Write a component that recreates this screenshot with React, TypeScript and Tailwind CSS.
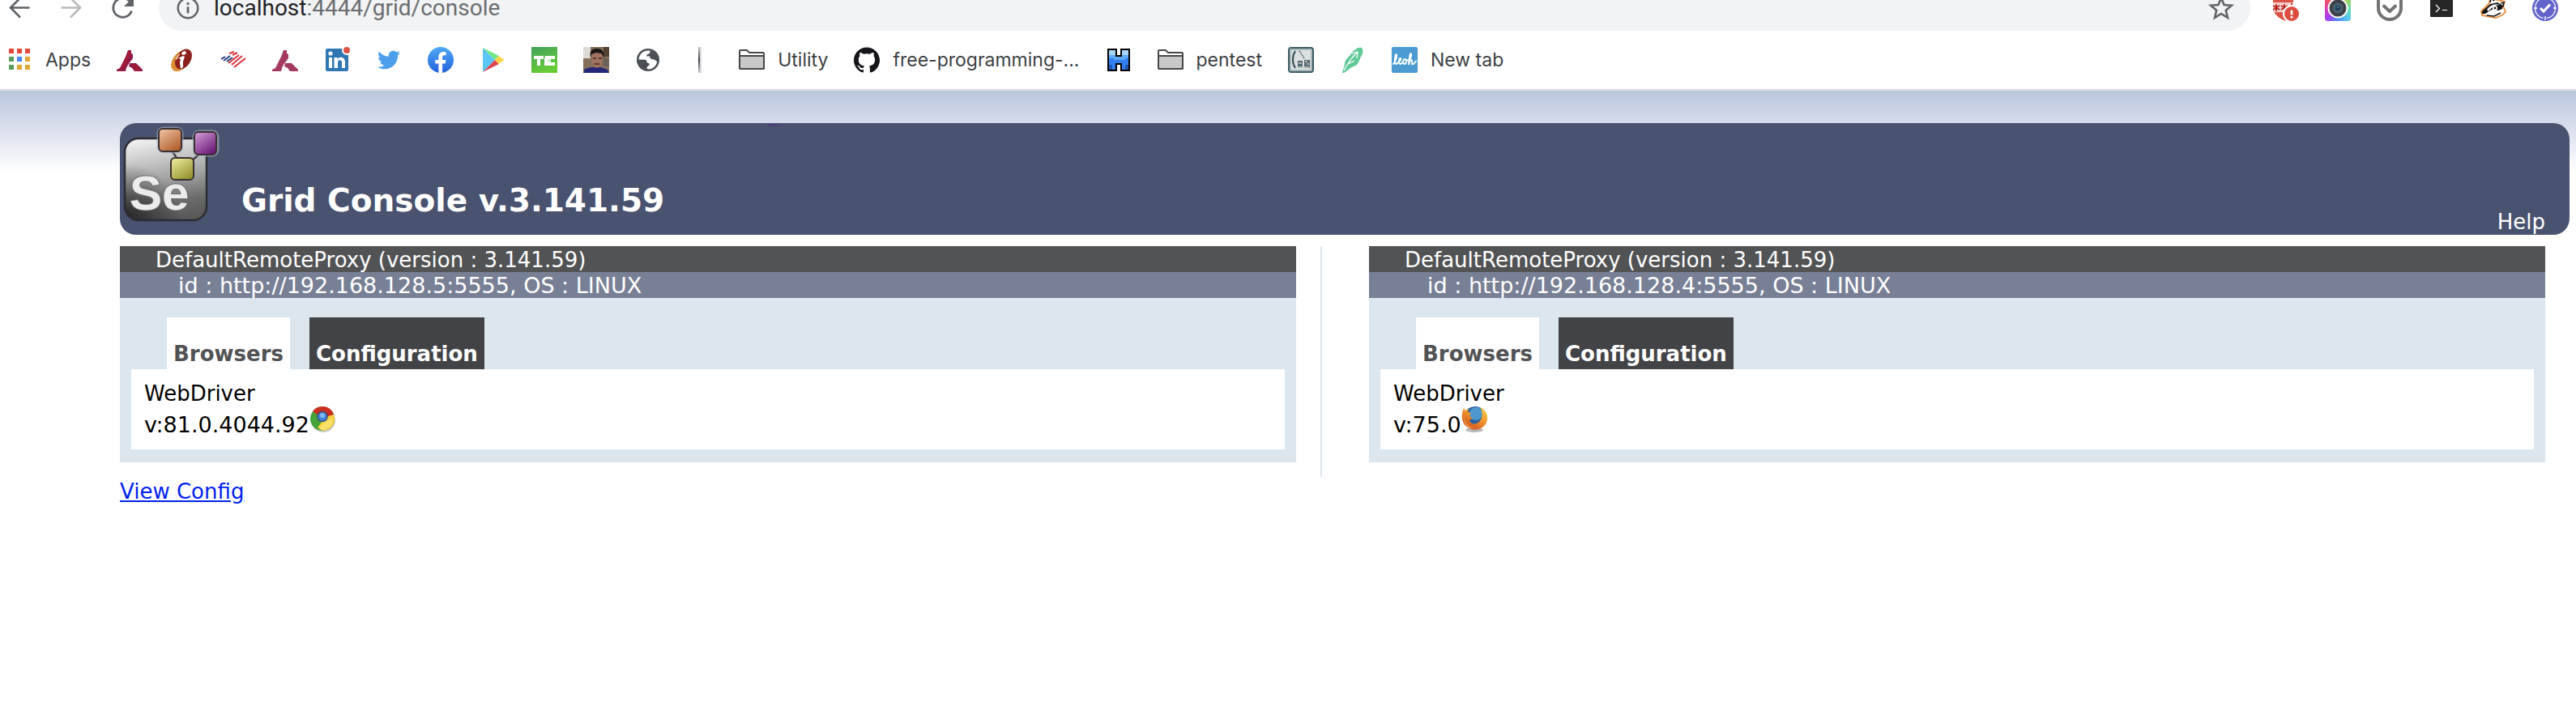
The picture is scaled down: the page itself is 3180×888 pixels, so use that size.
import React from "react";
import { FaTwitter } from "react-icons/fa";
import { SiGithub } from "react-icons/si";

type IconProps = { children: React.ReactNode; className?: string };

function Icon({ children, className = "size-8" }: IconProps) {
  return (
    <svg viewBox="0 0 32 32" className={`${className} shrink-0`} aria-hidden="true">
      {children}
    </svg>
  );
}

function AppsIcon() {
  const colors = [
    "#e2493b", "#e2493b", "#e2493b",
    "#559c5c", "#4688f1", "#e5a335",
    "#559c5c", "#e5a335", "#e5a335",
  ];
  return (
    <Icon>
      {colors.map((color, i) => (
        <rect key={i} x={3 + (i % 3) * 10} y={2 + Math.floor(i / 3) * 10} width="6" height="6" fill={color} />
      ))}
    </Icon>
  );
}

function PeakIcon({ color, shade }: { color: string; shade: string }) {
  return (
    <Icon>
      <path d="M14 4h4v4l2 1v5l-3 4-3 4-2 4-1 4H0v-2l4-2 3-6 4-8z" fill={color} />
      <path d="M16 20h8l4 4 4 4v2H22l-3-4-4-2z" fill={color} />
      <path d="M15 6l3 1-9 18-5 4 5-10zM19 21l4 1 6 7h-5z" fill={shade} opacity="0.7" />
    </Icon>
  );
}

function BankSwirlIcon() {
  return (
    <Icon>
      <ellipse cx="15" cy="17" rx="9.500" ry="15" transform="rotate(38 15 17)" fill="#dc8d35" />
      <ellipse cx="18.500" cy="15" rx="9" ry="13.500" transform="rotate(32 18.500 15)" fill="#8d1f1c" />
      <path d="M17 6l4-1 1 3-3 2-3-1zM12 14l6-3 2 1-2 6v7l-3 2-1-8 1-4z" fill="#fff" />
      <path d="M8 15l5-7 1 1-4 7z" fill="#f0c9a0" />
    </Icon>
  );
}

function FlagIcon() {
  return (
    <Icon>
      <path d="M1 15l5-3M4 17l8-6M8 18l7-5" stroke="#1f3a78" strokeWidth="2" />
      <path d="M11 8l6-2M15 10l6-3M10 20l13-10M14 22L27 11M17 25l14-11" stroke="#d8323f" strokeWidth="2" />
    </Icon>
  );
}

function LinkedInIcon() {
  return (
    <Icon>
      <rect x="2" y="2" width="28" height="28" rx="2" fill="#2f77b3" />
      <circle cx="8" cy="8" r="2.600" fill="#fff" />
      <path d="M6 13h4v13H6zM12.500 13h4v2c2.500-4 9.500-3 9.500 3.500V26h-4v-7c0-4-5-3.500-5 0v7h-4.500z" fill="#fff" />
      <circle cx="28" cy="4" r="6" fill="#fff" />
      <circle cx="28" cy="4" r="4" fill="#dc5244" />
    </Icon>
  );
}

function FacebookIcon() {
  return (
    <Icon>
      <defs>
        <linearGradient id="fb" x1="0" y1="0" x2="0" y2="1">
          <stop offset="0" stopColor="#4ea9f7" />
          <stop offset="1" stopColor="#2461da" />
        </linearGradient>
      </defs>
      <circle cx="16" cy="16" r="16" fill="url(#fb)" />
      <path d="M13.400 32V20.600H9.300V16h4.100v-3.600C13.400 8.300 15.700 6 19.400 6c1.500 0 3.200.3 3.200.3v4h-2c-1.900 0-2.500 1.200-2.500 2.400V16h4.300l-.8 4.600h-3.500V32z" fill="#fff" />
    </Icon>
  );
}

function PlayStoreIcon() {
  return (
    <Icon>
      <path d="M4 1v30l15-15z" fill="#5bc6f5" />
      <path d="M4 1l20 10-5 5z" fill="#6ee887" />
      <path d="M4 31l20-10-5-5z" fill="#de4350" />
      <path d="M23.500 11l6 4q1 1 0 2l-6 4-4.500-5z" fill="#fbd548" />
    </Icon>
  );
}

function TechIcon() {
  return (
    <Icon>
      <defs>
        <linearGradient id="tech" x1="0" y1="0" x2="0.400" y2="1">
          <stop offset="0" stopColor="#42a15c" />
          <stop offset="1" stopColor="#67cb35" />
        </linearGradient>
      </defs>
      <rect width="32" height="32" fill="url(#tech)" />
      <path d="M3 11h12v4h-4v8H7v-8H3zM17 11h12v4h-8v4h8v4H16v-8z" fill="#fff" />
      <rect x="20" y="15" width="4" height="4" fill="#d3f0d3" />
    </Icon>
  );
}

function PortraitIcon() {
  return (
    <Icon>
      <rect width="32" height="32" fill="#85705c" />
      <rect width="9" height="14" fill="#dedbd6" />
      <rect x="25" width="7" height="12" fill="#55412f" />
      <path d="M24 12l8 3v10l-8-2z" fill="#6d6258" />
      <path d="M0 32l2-5 8-2h12l8 3 2 4z" fill="#27277a" />
      <ellipse cx="17" cy="15" rx="7" ry="11" fill="#a07260" />
      <path d="M9 13C7 4 12 2 17 2s10 3 8 11l-2-5-7-1-6 2z" fill="#1b1618" />
      <path d="M12 13h4v2h-4zM19 13h4v2h-4zM14 20h6v2h-6z" fill="#5b352d" />
    </Icon>
  );
}

function GlobeIcon() {
  return (
    <Icon>
      <circle cx="16" cy="16" r="14" fill="#4c5054" />
      <path
        d="M18 4.600c-8-1.300-13.400 5-13.400 11l8 .2c2 .2 1.500 4 3.500 4.200 2.500.2 2 2.500 0 3.500-1.500 1-2 2.500-1 3.800 6 1 11.500-3.800 12-9.300-2-1.500-3.500-3-6-3-2 0-3-1.500-3-3.500h-4c-.5-3 4.500-2 4.500-6z"
        fill="#fff"
      />
      <path d="M22 6l-2 3 1 3 5 1z" fill="#4c5054" />
    </Icon>
  );
}

function DividerIcon() {
  return (
    <Icon>
      <defs>
        <linearGradient id="bar" x1="0" y1="0" x2="0" y2="1">
          <stop offset="0" stopColor="#c8c8cb" />
          <stop offset="0.500" stopColor="#3f4044" />
          <stop offset="1" stopColor="#c8c8cb" />
        </linearGradient>
      </defs>
      <rect x="14" width="2" height="32" fill="url(#bar)" />
      <rect x="16" width="2" height="32" fill="#d9d9de" />
    </Icon>
  );
}

function FolderIcon() {
  return (
    <Icon>
      <path d="M1 26V5q0-1 1-1h8l3 3h17q1 0 1 1v18q0 1-1 1H2q-1 0-1-1z" fill="#fff" stroke="#474747" strokeWidth="2" />
      <path d="M1 11h30v15q0 1-1 1H2q-1 0-1-1z" fill="#c8c8c8" stroke="#474747" strokeWidth="2" />
    </Icon>
  );
}

function BlockHIcon() {
  return (
    <Icon>
      <path d="M2 2h12v8h4V2h12v28H18v-8h-4v8H2z" fill="#000" />
      <path d="M4 4h8v8h8V4h8v24h-8v-8h-8v8H4z" fill="#327fee" />
      <path d="M4 4h8v6H4zM20 4h8v6h-8z" fill="#a9d4fb" />
      <path d="M4 10h8v2h8v-2h8v4h-4v2H10v-2H4z" fill="#5fa9f9" />
      <path d="M4 22h4v6H4zM24 22h4v6h-4z" fill="#2258b0" />
    </Icon>
  );
}

function SketchTileIcon() {
  return (
    <Icon>
      <rect x="1" y="1" width="30" height="30" rx="3" fill="#dbe0e1" stroke="#3b5c63" strokeWidth="2" />
      <rect x="3" y="3" width="26" height="26" rx="2" fill="none" stroke="#aab8bb" strokeWidth="2" />
      <path d="M9 5c-4 6-4 15 0 21" fill="none" stroke="#344c52" strokeWidth="2" />
      <path d="M14 5l6 9" stroke="#4e6368" strokeWidth="1.500" strokeDasharray="2 1" />
      <path d="M12 17h6v9h-6zM20 16h7v10h-7z" fill="#566a6e" />
      <path d="M13 20h4M21 18h3M23 21h3M12 25h14" stroke="#c8d0d1" strokeWidth="1.500" />
    </Icon>
  );
}

function FeatherIcon() {
  return (
    <Icon>
      <path d="M27 1c2 3 2 7-1 11-2 3-2 7-5 10-3 2-6 2-9 5L5 32H3c1-5 3-8 3-12 0-3 3-6 6-9C17 4 21 0 27 1z" fill="#5fc997" />
      <path d="M5 29C10 20 15 12 22 6l-7 2M22 6l-1 8M10 21l8-4" fill="none" stroke="#fff" strokeWidth="1.300" />
    </Icon>
  );
}

function ScriptTileIcon() {
  return (
    <Icon>
      <rect width="32" height="32" rx="2" fill="#4c9bd3" />
      <path
        d="M2 21c4-4 5-12 3.500-12S3 21 5 21s3-2 4-3c3-1 3-4 1.500-4s-2.500 7 0 7 3-2 4-4 3-3 3.500 0-1 4-2.500 4-2-4 0-6M18 16c2 1 2 0 3 0 3-1 4-8 2.500-8S21 21 21 22c1-4 2-6 3.500-6S24 22 26 21.500s2-2 4-4"
        fill="none"
        stroke="#fff"
        strokeWidth="1.800"
        strokeLinecap="round"
      />
    </Icon>
  );
}

function ArrowIcon({ color, flip }: { color: string; flip?: boolean }) {
  return (
    <Icon className={flip ? "size-8 -scale-x-100" : "size-8"}>
      <path d="M28.500 15.500H5.500M17 3.500L5 15.500l12 12" fill="none" stroke={color} strokeWidth="2.600" />
    </Icon>
  );
}

function ReloadIcon() {
  return (
    <Icon>
      <path d="M26.500 19.500A11.700 11.700 0 1 1 24 7.500" fill="none" stroke="#5f6368" strokeWidth="2.800" />
      <path d="M29 2v12H17z" fill="#5f6368" />
    </Icon>
  );
}

function InfoIcon() {
  return (
    <Icon className="size-7">
      <circle cx="16" cy="16" r="14" fill="none" stroke="#5f6368" strokeWidth="2.800" />
      <path d="M16 8v3.500M16 14v9" stroke="#5f6368" strokeWidth="3.200" />
    </Icon>
  );
}

function StarIcon() {
  return (
    <Icon>
      <path
        d="M16 3.500l3.600 8.500 9.200.8-7 6 2.100 9L16 23l-7.900 4.800 2.100-9-7-6 9.200-.8z"
        fill="none"
        stroke="#5f6368"
        strokeWidth="2.600"
      />
    </Icon>
  );
}

function PasswordShieldIcon() {
  return (
    <Icon>
      <path d="M0 0h25v16L16 32C5 28 0 22 0 14z" fill="#dc5244" />
      <rect y="9" width="25" height="12" fill="#f3cfcb" />
      <path d="M4 11v9M0 13l8 5M8 13l-8 5M14 11v9M10 13l8 5M18 13l-8 5M23 10v4" stroke="#b5201a" strokeWidth="1.800" />
      <circle cx="23" cy="23" r="11" fill="#fff" />
      <circle cx="23" cy="23" r="9" fill="#dc4d3f" />
      <path d="M23 18.500v6M23 26v2.500" stroke="#fff" strokeWidth="2.600" />
    </Icon>
  );
}

function LensIcon() {
  return (
    <div className="flex size-8 shrink-0 items-center justify-center rounded-sm bg-[conic-gradient(#f0a33a,#a8cf4d,#6fe0b0,#58c8ea,#4b8cf0,#a43ff0,#e33bb0,#ef5a55,#f0a33a)]">
      <svg viewBox="0 0 26 26" className="size-[26px]" aria-hidden="true">
        <circle cx="13" cy="13" r="12.500" fill="#fff" />
        <circle cx="13" cy="13" r="10.500" fill="#3d4147" />
        <circle cx="13" cy="13" r="6.500" fill="#4b5f70" />
        <circle cx="13" cy="13" r="3.200" fill="#233f57" />
        <circle cx="13" cy="12" r="1" fill="#5c90b5" />
      </svg>
    </div>
  );
}

function PocketIcon() {
  return (
    <Icon>
      <path d="M2 5q0-2 2-2h24q2 0 2 2v11a14 14 0 0 1-28 0z" fill="#fff" stroke="#737373" strokeWidth="4" />
      <path d="M9 13.500l7 6.500 7-6.500" fill="none" stroke="#737373" strokeWidth="4" strokeLinecap="round" strokeLinejoin="round" />
    </Icon>
  );
}

function TerminalIcon() {
  return (
    <Icon>
      <rect x="2" width="28" height="27" rx="1.500" fill="#262626" />
      <path d="M9 12l4.500 4.500L9 21M17 18.500h6" fill="none" stroke="#fff" strokeWidth="1.200" />
    </Icon>
  );
}

function BadgerIcon() {
  return (
    <Icon>
      <path d="M1 20L11 10l1-6 4 1 10 2 4 1-2 5 3 8-5 4-7 3-10-2-7-1z" fill="#fff" stroke="#e98b3c" strokeWidth="1.800" />
      <path d="M2 20L12 11l9-2 7 4-1 4-5 2-6-2-4 2-6 4H2z" fill="#151515" />
      <path d="M8 18c4-6 10-8 16-6-6 0-10 3-14 8z" fill="#fff" />
      <circle cx="18" cy="16" r="3" fill="#fff" />
      <circle cx="18" cy="16" r="1.400" fill="#151515" />
      <path d="M12 9l1-5 4 3M25 10l4-1-1 5M8 25l9 1 8-4" fill="none" stroke="#151515" strokeWidth="1.600" />
    </Icon>
  );
}

function BadgeCheckIcon() {
  return (
    <Icon>
      <circle cx="16" cy="16" r="16" fill="#6264cb" />
      <circle cx="16" cy="16" r="12.600" fill="none" stroke="#fff" strokeWidth="1.400" strokeDasharray="15 4.800" strokeDashoffset="-2.400" />
      <circle cx="4" cy="16" r="1.800" fill="#fff" />
      <circle cx="28" cy="16" r="1.800" fill="#fff" />
      <path d="M16 26v5" stroke="#fff" strokeWidth="1.400" />
      <path d="M10 16l4 4 8-8.500" fill="none" stroke="#fff" strokeWidth="3" />
    </Icon>
  );
}

function ChromeIcon() {
  return (
    <svg viewBox="0 0 32 32" className="inline-block size-8 align-baseline" role="img" aria-label="Chrome">
      <circle cx="17" cy="17" r="15" fill="#c9c9c9" />
      <circle cx="16" cy="15" r="15" fill="#45a33b" />
      <path d="M16 15L4 6C7 2 11 0 16 0c7 0 12 4 14 10z" fill="#cf2e22" />
      <path d="M20 13l10-3c4 9-3 20-14 20l-6-4 6-8z" fill="#f5d33f" />
      <path d="M12 27l8-9 9-3c0 8-6 14-13 14z" fill="#f8e06a" />
      <circle cx="16" cy="12.500" r="6.800" fill="#3c4f70" />
      <circle cx="16" cy="12.500" r="5.300" fill="#4384dc" />
      <circle cx="16" cy="11" r="3" fill="#83b8f3" />
    </svg>
  );
}

function FirefoxIcon() {
  return (
    <svg viewBox="0 0 32 32" className="inline-block size-8 align-baseline" role="img" aria-label="Firefox">
      <defs>
        <linearGradient id="fox" x1="0.900" y1="0" x2="0.200" y2="1">
          <stop offset="0" stopColor="#f6d24c" />
          <stop offset="0.500" stopColor="#ee8f2c" />
          <stop offset="1" stopColor="#c9451c" />
        </linearGradient>
      </defs>
      <ellipse cx="16" cy="29" rx="11" ry="3" fill="#b9b9bd" />
      <circle cx="17" cy="14" r="14" fill="#2c5f9e" />
      <circle cx="18" cy="9" r="8" fill="#4d97cf" />
      <path
        d="M3 2l2 3 4-2-1 4 4 1-2 4 4 2-4 3c1 5 8 6 12 2s5-12 1-18c8 3 11 12 8 19-4 8-14 11-21 7C0 23-1 11 3 2z"
        fill="url(#fox)"
      />
      <path d="M3 12c1 8 6 14 14 14-5 2-10 0-12-4-2-3-3-7-2-10z" fill="#f4ad52" opacity="0.700" />
    </svg>
  );
}

function SeleniumLogo() {
  return (
    <svg viewBox="1 2 130 130" className="size-[130px] shrink-0" role="img" aria-label="Selenium">
      <defs>
        <linearGradient id="body" x1="0.300" y1="0" x2="0.500" y2="1">
          <stop offset="0" stopColor="#efefef" />
          <stop offset="0.500" stopColor="#a4a4a4" />
          <stop offset="0.800" stopColor="#6c6c6c" />
          <stop offset="1" stopColor="#5a5a5a" />
        </linearGradient>
        <radialGradient id="corner" cx="0" cy="1" r="0.700">
          <stop offset="0" stopColor="#141414" stopOpacity="0.800" />
          <stop offset="1" stopColor="#141414" stopOpacity="0" />
        </radialGradient>
        <linearGradient id="orange" x1="0" y1="0" x2="0.700" y2="1">
          <stop offset="0" stopColor="#f2c7ab" />
          <stop offset="1" stopColor="#b1602b" />
        </linearGradient>
        <linearGradient id="purple" x1="0" y1="0" x2="0.700" y2="1">
          <stop offset="0" stopColor="#d7a2da" />
          <stop offset="1" stopColor="#6d1a77" />
        </linearGradient>
        <linearGradient id="yellow" x1="0" y1="0" x2="0.700" y2="1">
          <stop offset="0" stopColor="#f2f0a4" />
          <stop offset="1" stopColor="#96942d" />
        </linearGradient>
      </defs>
      <rect x="7" y="21" width="101" height="101" rx="17" fill="url(#body)" stroke="#2b2d33" strokeWidth="2.500" />
      <rect x="8" y="22" width="99" height="99" rx="16" fill="url(#corner)" />
      <path d="M64 34l10 16M103 37L88 50" stroke="#43454a" strokeWidth="2.500" />
      <g stroke="#aeb4c4" strokeOpacity="0.600" strokeWidth="5" fill="none">
        <rect x="49" y="9" width="28" height="28" rx="6" />
        <rect x="93" y="13" width="28" height="28" rx="6" />
      </g>
      <g stroke="#3a3030" strokeWidth="2">
        <rect x="49" y="9" width="28" height="28" rx="5" fill="url(#orange)" />
        <rect x="93" y="13" width="27" height="28" rx="5" fill="url(#purple)" />
        <rect x="64" y="45" width="28" height="27" rx="5" fill="url(#yellow)" />
      </g>
      <text
        x="13"
        y="109"
        fontFamily="Liberation Sans, Arial, sans-serif"
        fontWeight="bold"
        fontSize="60"
        fill="#ececec"
        stroke="#6a6a6a"
        strokeWidth="2"
        paintOrder="stroke"
      >
        Se
      </text>
    </svg>
  );
}

const bookmarks: { name: string; label?: string; icon: React.ReactNode }[] = [
  { name: "Apps", label: "Apps", icon: <AppsIcon /> },
  { name: "Peak", icon: <PeakIcon color="#941b49" shade="#a81f24" /> },
  { name: "Bank", icon: <BankSwirlIcon /> },
  { name: "Flag", icon: <FlagIcon /> },
  { name: "Peak Rewards", icon: <PeakIcon color="#a33a62" shade="#a33a62" /> },
  { name: "LinkedIn", icon: <LinkedInIcon /> },
  { name: "Twitter", icon: <FaTwitter className="size-8 shrink-0 px-[2px] text-[#4c9fea]" /> },
  { name: "Facebook", icon: <FacebookIcon /> },
  { name: "Play Store", icon: <PlayStoreIcon /> },
  { name: "Tech news", icon: <TechIcon /> },
  { name: "Profile", icon: <PortraitIcon /> },
  { name: "Website", icon: <GlobeIcon /> },
  { name: "Divider", icon: <DividerIcon /> },
  { name: "Utility", label: "Utility", icon: <FolderIcon /> },
  { name: "free-programming", label: "free-programming-...", icon: <SiGithub className="size-8 shrink-0 text-[#17151a]" /> },
  { name: "H", icon: <BlockHIcon /> },
  { name: "pentest", label: "pentest", icon: <FolderIcon /> },
  { name: "Sketch", icon: <SketchTileIcon /> },
  { name: "Feather", icon: <FeatherIcon /> },
  { name: "New tab", label: "New tab", icon: <ScriptTileIcon /> },
];

const extensions = [
  { name: "Password alert", icon: <PasswordShieldIcon /> },
  { name: "Camera", icon: <LensIcon /> },
  { name: "Pocket", icon: <PocketIcon /> },
  { name: "Terminal", icon: <TerminalIcon /> },
  { name: "Badger", icon: <BadgerIcon /> },
  { name: "Verified", icon: <BadgeCheckIcon /> },
];

function BrowserBar() {
  return (
    <header className="border-b-2 border-[#dadce0] bg-white font-['Inter',sans-serif]">
      <div className="h-[38px] overflow-hidden">
        <div className="-mt-[18px] flex h-14 items-center pr-[22px] pl-2">
          <div className="flex items-center gap-8 pr-7">
            <button aria-label="Back"><ArrowIcon color="#5f6368" /></button>
            <button aria-label="Forward"><ArrowIcon color="#bababc" flip /></button>
            <button aria-label="Reload"><ReloadIcon /></button>
          </div>
          <div className="flex h-14 flex-1 items-center gap-[18px] rounded-full bg-[#f1f3f4] pr-5 pl-[22px]">
            <InfoIcon />
            <div className="flex-1 font-['Roboto',sans-serif] text-[28px] leading-8 text-[#6b6d70]">
              <span className="text-[#202124]">localhost</span>:4444/grid/console
            </div>
            <button aria-label="Bookmark this page"><StarIcon /></button>
          </div>
          <div className="flex items-center gap-8 pl-7">
            {extensions.map((item) => (
              <button key={item.name} aria-label={item.name}>{item.icon}</button>
            ))}
          </div>
        </div>
      </div>
      <nav className="flex h-[72px] items-center gap-8 px-2">
        {bookmarks.map((item) => (
          <a key={item.name} href="#" aria-label={item.name} className="flex items-center gap-4 whitespace-nowrap">
            {item.icon}
            {item.label && <span className="text-[23px] leading-8 text-[#3c4043]">{item.label}</span>}
          </a>
        ))}
      </nav>
    </header>
  );
}

type ProxyProps = { address: string; version: string; icon: React.ReactNode };

function Proxy({ address, version, icon }: ProxyProps) {
  return (
    <section className="bg-[#dce6ee] pb-4">
      <p className="h-8 bg-[#525355] pl-11 leading-[34px] text-white">DefaultRemoteProxy (version : 3.141.59)</p>
      <p className="h-8 bg-[#788095] pl-[72px] text-[27px] leading-[34px] text-white">id : http://{address}:5555, OS : LINUX</p>
      <div className="flex gap-6 pt-6 pl-[58px]">
        <button className="flex h-16 items-end bg-white px-2 pb-[3px] font-bold text-[#525355]">Browsers</button>
        <button className="flex h-16 items-end bg-[#424346] px-2 pb-[3px] font-bold text-white">Configuration</button>
      </div>
      <div className="mx-3.5 bg-white px-4 py-3.5 text-black">
        <p>WebDriver</p>
        <p className="text-[27px]">v:{version}{icon}</p>
      </div>
    </section>
  );
}

export default function App() {
  return (
    <div className="min-h-screen bg-white">
      <BrowserBar />
      <div className="bg-[linear-gradient(to_bottom,#bbc6dc_0,#dce1ed_50px,#fff_100px)] pt-10 pr-2 pl-[148px] font-['Verdana','DejaVu_Sans',sans-serif] text-[26px] leading-8">
        <div className="relative flex h-[138px] items-end justify-between rounded-[20px] bg-[#49536f] pr-[30px] text-white">
          <div className="flex items-end gap-5">
            <div className="pb-2"><SeleniumLogo /></div>
            <h1 className="pb-[18px] text-[39px] leading-[48px] font-bold">Grid Console v.3.141.59</h1>
          </div>
          <a href="#" className="absolute top-0 left-[800px] text-[4px] leading-[5px] text-[#551a8b]">Selenium</a>
          <a href="#">Help</a>
        </div>
        <main className="flex pt-3.5">
          <div className="flex-1 border-r-2 border-[#dce6ee] pr-[30px] pb-[18px]">
            <Proxy address="192.168.128.5" version="81.0.4044.92" icon={<ChromeIcon />} />
          </div>
          <div className="flex-1 pr-[30px] pl-[58px]">
            <Proxy address="192.168.128.4" version="75.0" icon={<FirefoxIcon />} />
          </div>
        </main>
        <div className="pt-0.5">
          <a href="#" className="text-[#0022ee] underline">View Config</a>
        </div>
      </div>
    </div>
  );
}
